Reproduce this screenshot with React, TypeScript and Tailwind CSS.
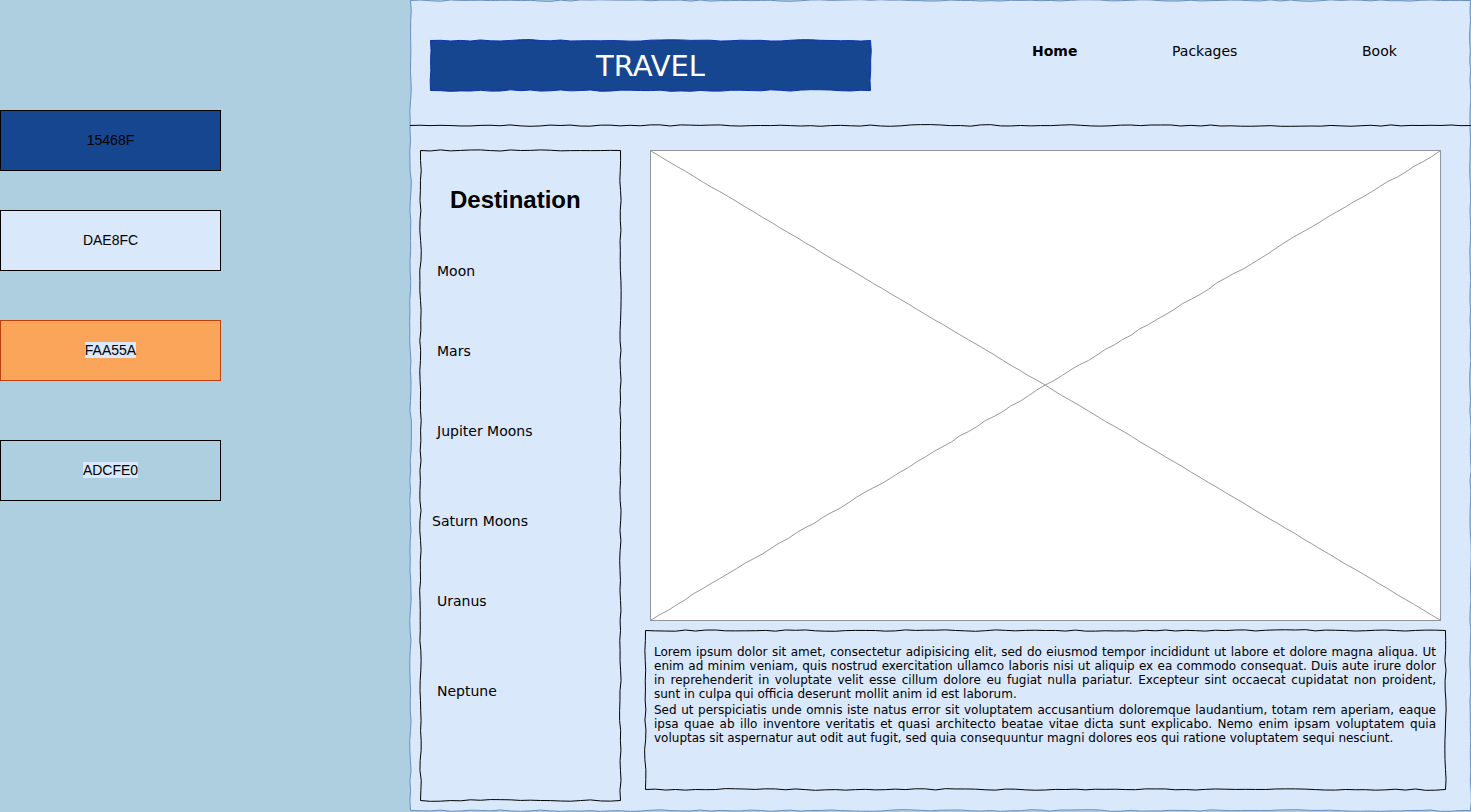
import React from "react";

type Point = [number, number];

/** Small deterministic generator, so that every render draws the same wobble. */
function createRandom(seed: number) {
  let state = seed;
  return () => {
    state = (state * 16807) % 2147483647;
    return state / 2147483647;
  };
}

/** Hand-drawn line from a to b: a joint every `step` units, each pushed off the line. */
function wobble(a: Point, b: Point, seed: number, amount = 1, step = 10): Point[] {
  const random = createRandom(seed * 7919 + 17);
  random();
  const dx = b[0] - a[0];
  const dy = b[1] - a[1];
  const length = Math.hypot(dx, dy);
  const count = Math.max(1, Math.round(length / step));
  const points: Point[] = [a];
  let previous = 0;
  for (let i = 1; i < count; i++) {
    const t = i / count;
    const off = (random() * 2 - 1) * amount * 0.75 + previous * 0.25;
    previous = off;
    points.push([a[0] + dx * t - (dy / length) * off, a[1] + dy * t + (dx / length) * off]);
  }
  points.push(b);
  return points;
}

function toPath(points: Point[]) {
  return points.map(([x, y], i) => `${i ? "L" : "M"}${x.toFixed(2)} ${y.toFixed(2)}`).join(" ");
}

interface SketchFrameProps {
  width: number;
  height: number;
  seed: number;
  className: string;
}

/** Wobbly outline stretched behind a panel's content. */
function SketchFrame({ width, height, seed, className }: SketchFrameProps) {
  const l = 0.5;
  const t = 0.5;
  const r = width - 0.5;
  const b = height - 0.5;
  const d = toPath([
    ...wobble([l, t], [r, t], seed),
    ...wobble([r, t], [r, b], seed + 1),
    ...wobble([r, b], [l, b], seed + 2),
    ...wobble([l, b], [l, t], seed + 3),
  ]);
  return (
    <svg
      aria-hidden="true"
      viewBox={`0 0 ${width} ${height}`}
      preserveAspectRatio="none"
      className={`pointer-events-none absolute inset-0 h-full w-full overflow-visible ${className}`}
    >
      <path d={`${d} Z`} strokeWidth={1} vectorEffect="non-scaling-stroke" />
    </svg>
  );
}

const swatches = [
  { code: "15468F", box: "border-black bg-[#15468f]", label: "" },
  { code: "DAE8FC", box: "mt-[39px] border-black bg-[#dae8fc]", label: "" },
  { code: "FAA55A", box: "mt-[49px] border-[#bd3f0c] bg-[#faa55a]", label: "bg-[#dae8fc]" },
  { code: "ADCFE0", box: "mt-[59px] border-black bg-[#adcfe0]", label: "bg-[#dae8fc]" },
];

const destinations = [
  { name: "Moon", row: "pl-[17px]" },
  { name: "Mars", row: "mt-[60px] pl-[17px]" },
  { name: "Jupiter Moons", row: "mt-[60px] pl-[17px]" },
  { name: "Saturn Moons", row: "mt-[70px] pl-3" },
  { name: "Uranus", row: "mt-[60px] pl-[17px]" },
  { name: "Neptune", row: "mt-[70px] pl-[17px]" },
];

function Palette() {
  return (
    <ul className="w-[410px] shrink-0 pt-[110px] font-['Liberation_Sans',sans-serif] text-sm leading-4 text-black">
      {swatches.map(({ code, box, label }) => (
        <li key={code} className={`flex h-[61px] w-[221px] items-start justify-center border pt-[21px] ${box}`}>
          <span className={label}>{code}</span>
        </li>
      ))}
    </ul>
  );
}

function Header() {
  return (
    <header className="relative flex items-start pt-10 pr-5 pb-[34px] pl-5">
      <div className="relative flex h-[51px] w-[441px] items-center justify-center">
        <SketchFrame width={441} height={51} seed={11} className="fill-[#15468f] stroke-[#0a32ad]" />
        <h1 className="relative text-[29px] leading-9 text-white">TRAVEL</h1>
      </div>
      <nav className="mt-px ml-auto grid grid-cols-[140px_190px_89px] text-sm leading-5">
        <a href="#home" className="justify-self-start font-bold">Home</a>
        <a href="#packages" className="justify-self-start">Packages</a>
        <a href="#book" className="justify-self-start">Book</a>
      </nav>
    </header>
  );
}

function Divider() {
  return (
    <svg
      aria-hidden="true"
      viewBox="0 0 1061 1"
      preserveAspectRatio="none"
      className="block h-px w-full overflow-visible fill-none stroke-black"
    >
      <path d={toPath(wobble([0, 0.5], [1061, 0.5], 31))} strokeWidth={1} vectorEffect="non-scaling-stroke" />
    </svg>
  );
}

function Destinations() {
  return (
    <aside className="relative w-[201px] shrink-0 pt-9 pb-[100px]">
      <SketchFrame width={201} height={651} seed={41} className="fill-none stroke-black" />
      <h2 className="pl-[30px] font-['Liberation_Sans',sans-serif] text-2xl leading-7 font-bold">Destination</h2>
      <ul className="mt-[47px] text-sm leading-5">
        {destinations.map(({ name, row }) => (
          <li key={name} className={row}>
            <a href="#destination">{name}</a>
          </li>
        ))}
      </ul>
    </aside>
  );
}

function ImagePlaceholder() {
  return (
    <div className="mx-[5px] h-[471px] border border-[#8f959f] bg-white">
      <svg
        role="img"
        aria-label="Image placeholder"
        viewBox="0 0 789 469"
        preserveAspectRatio="none"
        className="block h-full w-full fill-none stroke-[#999999]"
      >
        <path d={toPath(wobble([0, 0], [789, 469], 53, 0.4))} strokeWidth={1} vectorEffect="non-scaling-stroke" />
        <path d={toPath(wobble([789, 0], [0, 469], 57, 1))} strokeWidth={1} vectorEffect="non-scaling-stroke" />
      </svg>
    </div>
  );
}

function Description() {
  return (
    <article className="relative mt-[9px] min-h-[160px] pt-[15px] pr-[10px] pb-4 pl-[9px] text-justify text-xs leading-[14px]">
      <SketchFrame width={801} height={160} seed={61} className="fill-none stroke-black" />
      <p>
        Lorem ipsum dolor sit amet, consectetur adipisicing elit, sed do eiusmod tempor incididunt ut labore et
        dolore magna aliqua. Ut enim ad minim veniam, quis nostrud exercitation ullamco laboris nisi ut aliquip ex
        ea commodo consequat. Duis aute irure dolor in reprehenderit in voluptate velit esse cillum dolore eu fugiat
        nulla pariatur. Excepteur sint occaecat cupidatat non proident, sunt in culpa qui officia deserunt mollit
        anim id est laborum.
      </p>
      <p className="mt-[2px]">
        Sed ut perspiciatis unde omnis iste natus error sit voluptatem accusantium doloremque laudantium, totam rem
        aperiam, eaque ipsa quae ab illo inventore veritatis et quasi architecto beatae vitae dicta sunt explicabo.
        Nemo enim ipsam voluptatem quia voluptas sit aspernatur aut odit aut fugit, sed quia consequuntur magni
        dolores eos qui ratione voluptatem sequi nesciunt.
      </p>
    </article>
  );
}

export default function App() {
  return (
    <div className="flex min-h-screen items-start bg-[#adcfe0] font-['DejaVu_Sans',sans-serif] text-black">
      <Palette />
      <main className="relative min-w-0 flex-1">
        <SketchFrame width={1061} height={811} seed={3} className="fill-[#dae8fc] stroke-[#6c8ebf]" />
        <div className="relative">
          <Header />
          <Divider />
          <div className="flex items-start gap-6 pt-6 pr-[25px] pb-[10px] pl-[10px]">
            <Destinations />
            <section className="min-w-0 flex-1">
              <ImagePlaceholder />
              <Description />
            </section>
          </div>
        </div>
      </main>
    </div>
  );
}
